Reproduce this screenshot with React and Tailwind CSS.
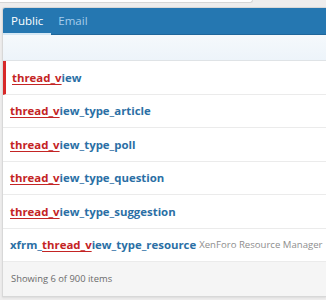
import React from "react";

const rows = [
  { pre: "", rest: "iew", active: true },
  { pre: "", rest: "iew_type_article" },
  { pre: "", rest: "iew_type_poll" },
  { pre: "", rest: "iew_type_question" },
  { pre: "", rest: "iew_type_suggestion" },
  { pre: "xfrm_", rest: "iew_type_resource", addon: "XenForo Resource Manager" },
];

const App = () => {
  return (
    <div
      className="w-[326px] h-[300px] bg-[#eeeded] overflow-hidden"
      style={{ fontFamily: '"Open Sans", "Noto Sans", sans-serif' }}
    >
      {/* top input edge */}
      <div className="h-[7px] flex">
        <div className="w-[253px] h-[3px] bg-white border-b border-r border-[#d6d6d6] rounded-br-sm" />
      </div>

      <div className="ml-[2px] bg-white border border-[#d8d8d8] border-r-0 rounded-tl-[3px] shadow-[0_1px_2px_rgba(0,0,0,0.08)]">
        {/* tabs */}
        <div className="h-[27px] bg-[#2577b1] flex items-stretch rounded-tl-[2px] border-b border-[#1f669a]">
          <div className="px-2 flex items-center text-[11.5px] text-white border-b-2 border-[#d5e8f5] -mb-px">
            Public
          </div>
          <div className="px-[7px] flex items-center text-[11.5px] text-[#a6cdec]">Email</div>
        </div>
        <div className="h-[26px] bg-gradient-to-b from-[#f5f9fc] to-[#edf4fa] border-b border-[#dfe3e6]" />

        {/* list */}
        <div>
          {rows.map((r, i) => (
            <div
              key={i}
              className={
                "h-[33.5px] flex items-center border-b border-[#ebebeb] " +
                (r.active ? "border-l-[3px] border-l-[#d72828] pl-[6px]" : "pl-[7px]")
              }
            >
              <span className="text-[11.4px] font-bold text-[#2b6fa5] whitespace-nowrap">
                {r.pre}
                <span className="text-[#c42424] underline decoration-1 underline-offset-2">thread_v</span>
                {r.rest}
              </span>
              {r.addon && (
                <span className="ml-[3px] text-[9.6px] text-[#8e8e8e] whitespace-nowrap">{r.addon}</span>
              )}
            </div>
          ))}
        </div>

        {/* footer */}
        <div className="h-[34px] bg-[#f5f5f5] flex items-center pl-[8px] text-[9.4px] text-[#6b6b6b]">
          Showing 6 of 900 items
        </div>
      </div>
    </div>
  );
};

export default App;
